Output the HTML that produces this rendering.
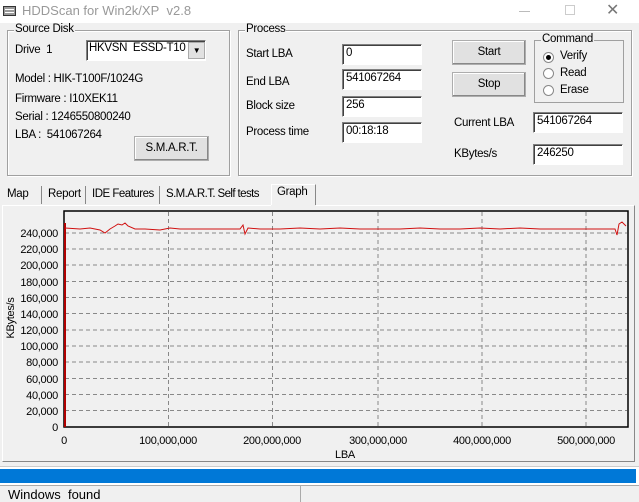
<!DOCTYPE html>
<html><head><meta charset="utf-8"><style>
*{margin:0;padding:0;box-sizing:border-box}
body{width:639px;height:502px;background:#f0f0f0;font-family:"Liberation Sans",Arial,sans-serif;font-size:11.5px;letter-spacing:-0.3px;color:#000;position:relative;overflow:hidden}
.a{position:absolute;white-space:nowrap}
.grp{position:absolute;border:1px solid #a0a0a0;box-shadow:1px 1px 0 #fff inset,1px 1px 0 #fff}
.leg{position:absolute;background:#f0f0f0;padding:0 1px;top:-8px}
.ed{position:absolute;background:#fff;border-top:1px solid #808080;border-left:1px solid #808080;border-right:1px solid #fff;border-bottom:1px solid #fff;box-shadow:inset 1px 1px 0 #404040;padding:2px 3px;height:21px}
.btn{position:absolute;background:#e1e1e1;border:1px solid #adadad;box-shadow:inset -1px -1px 0 #888,inset 1px 1px 0 #fff;text-align:center}
.rad{position:absolute;width:11px;height:11px;border-radius:50%;background:#fff;border:1px solid #888}
</style></head><body>
<div class="a" style="left:0;top:0;width:639px;height:23px;background:#fff"></div>
<div class="a" style="left:3px;top:6px;width:13px;height:10px;border:1px solid #333;background:#999"><div style="margin:2px 1px;height:1px;background:#fff"></div><div style="margin:1px 1px;height:1px;background:#fff"></div></div>
<div class="a" style="left:22px;top:3px;font-size:13px;color:#999;letter-spacing:0">HDDScan for Win2k/XP&nbsp; v2.8</div>
<div class="a" style="left:519px;top:11px;width:11px;height:1px;background:#bbb"></div>
<div class="a" style="left:565px;top:5px;width:10px;height:10px;border:1px solid #ccc"></div>
<div class="a" style="left:606px;top:0px;font-size:16px;color:#777">✕</div>

<div class="grp" style="left:7px;top:30px;width:223px;height:146px"><span class="leg" style="left:6px">Source Disk</span></div>
<div class="a" style="left:15px;top:44px">Drive&nbsp; 1</div>
<div class="ed" style="left:86px;top:40px;width:120px;height:21px;padding:1px 2px;overflow:hidden">HKVSN&nbsp; ESSD-T10</div>
<div class="a" style="left:188px;top:42px;width:17px;height:17px;background:#e1e1e1;border:1px solid #aaa;font-size:8px;text-align:center;line-height:16px">▼</div>
<div class="a" style="left:15px;top:73px">Model : HIK-T100F/1024G</div>
<div class="a" style="left:15px;top:93px">Firmware : I10XEK11</div>
<div class="a" style="left:15px;top:111px">Serial : 1246550800240</div>
<div class="a" style="left:15px;top:129px">LBA :&nbsp; 541067264</div>
<div class="btn" style="left:134px;top:136px;width:75px;height:25px;line-height:23px">S.M.A.R.T.</div>

<div class="grp" style="left:238px;top:30px;width:394px;height:146px"><span class="leg" style="left:6px">Process</span></div>
<div class="a" style="left:246px;top:48px">Start LBA</div>
<div class="a" style="left:246px;top:76px">End LBA</div>
<div class="a" style="left:246px;top:100px">Block size</div>
<div class="a" style="left:246px;top:126px">Process time</div>
<div class="ed" style="left:342px;top:44px;width:80px">0</div>
<div class="ed" style="left:342px;top:69px;width:80px">541067264</div>
<div class="ed" style="left:342px;top:96px;width:80px">256</div>
<div class="ed" style="left:342px;top:122px;width:80px">00:18:18</div>
<div class="btn" style="left:452px;top:40px;width:74px;height:25px;line-height:23px">Start</div>
<div class="btn" style="left:452px;top:72px;width:74px;height:25px;line-height:23px">Stop</div>
<div class="grp" style="left:534px;top:40px;width:90px;height:63px;box-shadow:none"><span class="leg" style="left:6px">Command</span></div>
<div class="rad" style="left:543px;top:52px"><div style="width:5px;height:5px;border-radius:50%;background:#000;margin:2px"></div></div>
<div class="a" style="left:560px;top:50px">Verify</div>
<div class="rad" style="left:543px;top:68px"></div>
<div class="a" style="left:560px;top:67px">Read</div>
<div class="rad" style="left:543px;top:85px"></div>
<div class="a" style="left:560px;top:84px">Erase</div>
<div class="a" style="left:454px;top:117px">Current LBA</div>
<div class="a" style="left:454px;top:148px">KBytes/s</div>
<div class="ed" style="left:533px;top:112px;width:90px">541067264</div>
<div class="ed" style="left:533px;top:144px;width:90px">246250</div>

<div class="a" style="left:7px;top:188px">Map</div>
<div class="a" style="left:41px;top:186px;width:1px;height:18px;background:#888"></div>
<div class="a" style="left:48px;top:188px">Report</div>
<div class="a" style="left:85px;top:186px;width:1px;height:18px;background:#888"></div>
<div class="a" style="left:92px;top:188px;letter-spacing:-0.5px">IDE Features</div>
<div class="a" style="left:159px;top:186px;width:1px;height:18px;background:#888"></div>
<div class="a" style="left:166px;top:188px;letter-spacing:-0.6px">S.M.A.R.T. Self tests</div>
<div class="a" style="left:271px;top:184px;width:45px;height:22px;background:#f0f0f0;border:1px solid #fff;border-right:1px solid #888;border-bottom:none"></div>
<div class="a" style="left:277px;top:186px">Graph</div>
<div class="a" style="left:2px;top:205px;width:633px;height:257px;border:1px solid #fff;border-right:1px solid #888;border-bottom:1px solid #888"></div>
<div class="a" style="left:271px;top:205px;width:45px;height:1px;background:#f0f0f0"></div>

<svg class="a" style="left:0;top:0" width="639" height="470" font-family="Liberation Sans,Arial,sans-serif" font-size="11">
<rect x="64" y="211" width="564" height="216" fill="none" stroke="#000" stroke-width="1.5"/>
<g stroke="#888" stroke-dasharray="4,3" stroke-width="1">
<line x1="65" x2="627" y1="233" y2="233"/><line x1="65" x2="627" y1="249" y2="249"/><line x1="65" x2="627" y1="265" y2="265"/><line x1="65" x2="627" y1="281.5" y2="281.5"/><line x1="65" x2="627" y1="297.5" y2="297.5"/><line x1="65" x2="627" y1="313.5" y2="313.5"/><line x1="65" x2="627" y1="330" y2="330"/><line x1="65" x2="627" y1="346" y2="346"/><line x1="65" x2="627" y1="362" y2="362"/><line x1="65" x2="627" y1="378.5" y2="378.5"/><line x1="65" x2="627" y1="394.5" y2="394.5"/><line x1="65" x2="627" y1="410.5" y2="410.5"/>
<line x1="168.5" x2="168.5" y1="212" y2="426"/><line x1="272.5" x2="272.5" y1="212" y2="426"/><line x1="378" x2="378" y1="212" y2="426"/><line x1="482" x2="482" y1="212" y2="426"/><line x1="586" x2="586" y1="212" y2="426"/>
</g>
<g font-size="11" text-anchor="end">
<text x="58" y="237">240,000</text><text x="58" y="253">220,000</text><text x="58" y="269">200,000</text><text x="58" y="286">180,000</text><text x="58" y="302">160,000</text><text x="58" y="318">140,000</text><text x="58" y="334">120,000</text><text x="58" y="350">100,000</text><text x="58" y="366">80,000</text><text x="58" y="383">60,000</text><text x="58" y="399">40,000</text><text x="58" y="415">20,000</text><text x="58" y="431">0</text>
</g>
<g font-size="11" text-anchor="middle">
<text x="64" y="444">0</text><text x="168" y="444">100,000,000</text><text x="272" y="444">200,000,000</text><text x="378" y="444">300,000,000</text><text x="482" y="444">400,000,000</text><text x="586" y="444">500,000,000</text>
<text x="345" y="458">LBA</text>
<text transform="translate(14,318) rotate(-90)">KBytes/s</text>
</g>
<line x1="65" y1="427" x2="65" y2="223" stroke="#b00000" stroke-width="2"/>
<polyline fill="none" stroke="#d01010" stroke-width="1" points="65,228 80,229 90,228 100,230 105,233 110,229 115,226 118,224 122,225 125,223 128,226 135,229 145,229 160,230 170,228 180,229 200,229 220,229 240,229 243,225 245,234 248,228 260,229 280,229 300,228 320,229 340,228 360,229 380,229 400,229 420,228 440,229 460,229 480,228 500,229 520,228 540,229 560,229 580,229 600,229 615,229 617,235 619,224 622,222 626,226"/>
</svg>

<div class="a" style="left:0;top:466px;width:639px;height:19px;background:#fff;border-top:1px solid #ccc"></div>
<div class="a" style="left:0;top:469px;width:636px;height:14px;background:#0078d7"></div>
<div class="a" style="left:0;top:485px;width:639px;height:17px;border-top:1px solid #aaa"></div>
<div class="a" style="left:300px;top:486px;width:1px;height:16px;background:#aaa"></div>
<div class="a" style="left:8px;top:487px;font-size:13px;letter-spacing:0">Windows&nbsp; found</div>
</body></html>
